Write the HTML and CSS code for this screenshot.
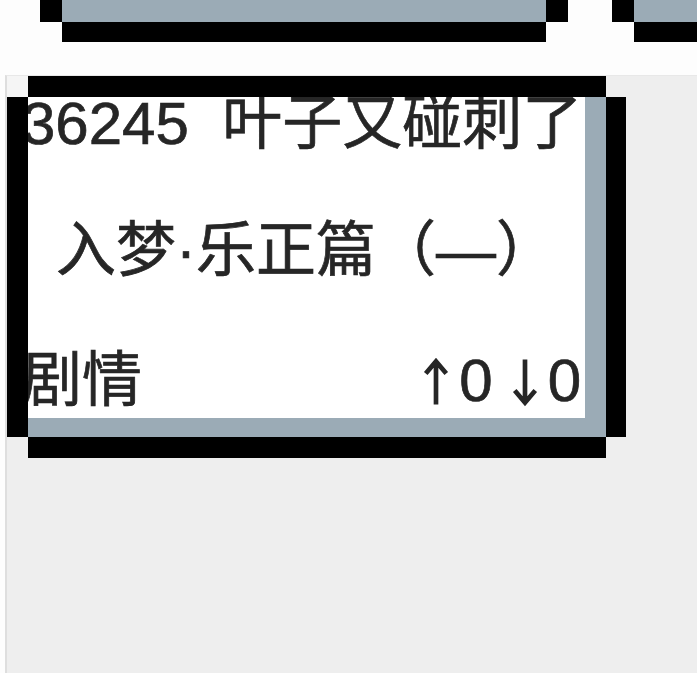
FILE: index.html
```html
<!DOCTYPE html>
<html lang="zh">
<head>
<meta charset="utf-8">
<link rel="stylesheet" href="styles.css">
</head>
<body>
<div class="top-row">
  <div class="top-card"></div>
  <div class="top-card"></div>
</div>
<div class="panel">
  <div class="card">
    <div class="line-title">36245&nbsp; 叶子又碰刺了</div>
    <div class="line-name">入梦·乐正篇（—）</div>
    <div class="line-meta">
      <span class="tag">剧情</span>
      <span class="votes">
        <span class="vote"><svg class="arrow" viewBox="0 0 30 52" aria-label="↑"><path d="M15 4 V50 M4 17 L15 4 L26 17" fill="none" stroke="#262626" stroke-width="5" stroke-linejoin="miter"/></svg>0</span>
        <span class="vote"><svg class="arrow" viewBox="0 0 30 52" aria-label="↓"><path d="M15 2 V48 M4 35 L15 48 L26 35" fill="none" stroke="#262626" stroke-width="5" stroke-linejoin="miter"/></svg>0</span>
      </span>
    </div>
  </div>
</div>
</body>
</html>
```
FILE: styles.css
```css
html, body {
  margin: 0;
  padding: 0;
  width: 697px;
  height: 673px;
  overflow: hidden;
  background: #fdfdfd;
}
body {
  font-family: "Liberation Sans", "Noto Sans CJK SC", sans-serif;
  color: #262626;
}
.top-row {
  display: flex;
  gap: 88px;
  padding-left: 62px;
  height: 22px;
}
.top-card {
  flex: 0 0 484px;
  height: 22px;
  background: #9babb6;
  box-shadow: -22px 0 0 #000, 22px 0 0 #000, 0 20px 0 #000;
}
.panel {
  margin-top: 53px;
  margin-left: 5px;
  height: 600px;
  background: #eeeeee;
  border-left: 2px solid #dedede;
  border-top: 1px solid #e8e8e8;
  padding-top: 21px;
  padding-left: 21px;
}
.card {
  width: 578px;
  height: 340px;
  background: #fff;
  overflow: hidden;
  box-shadow:
    inset -21px -19px 0 #9babb6,
    0 -21px 0 #000,
    0 21px 0 #000,
    -21px 0 0 #000,
    20px 0 0 #000,
    -21px -21px 0 #f5f5f5;
  font-size: 60px;
  line-height: 60px;
  -webkit-text-stroke: 0.7px #262626;
}
.line-title {
  white-space: nowrap;
  margin-left: -6px;
  margin-top: -3px;
}
.line-name {
  text-align: center;
  margin-top: 67px;
  margin-right: 22px;
  white-space: nowrap;
}
.line-meta {
  display: flex;
  justify-content: space-between;
  align-items: center;
  margin-top: 70px;
  margin-left: -6px;
  margin-right: 27px;
  white-space: nowrap;
}
.votes {
  display: flex;
  gap: 20px;
  letter-spacing: -2px;
}
.vote {
  display: flex;
  align-items: center;
  gap: 9px;
}
.arrow {
  width: 28px;
  height: 50px;
  margin-top: 2px;
}
```
